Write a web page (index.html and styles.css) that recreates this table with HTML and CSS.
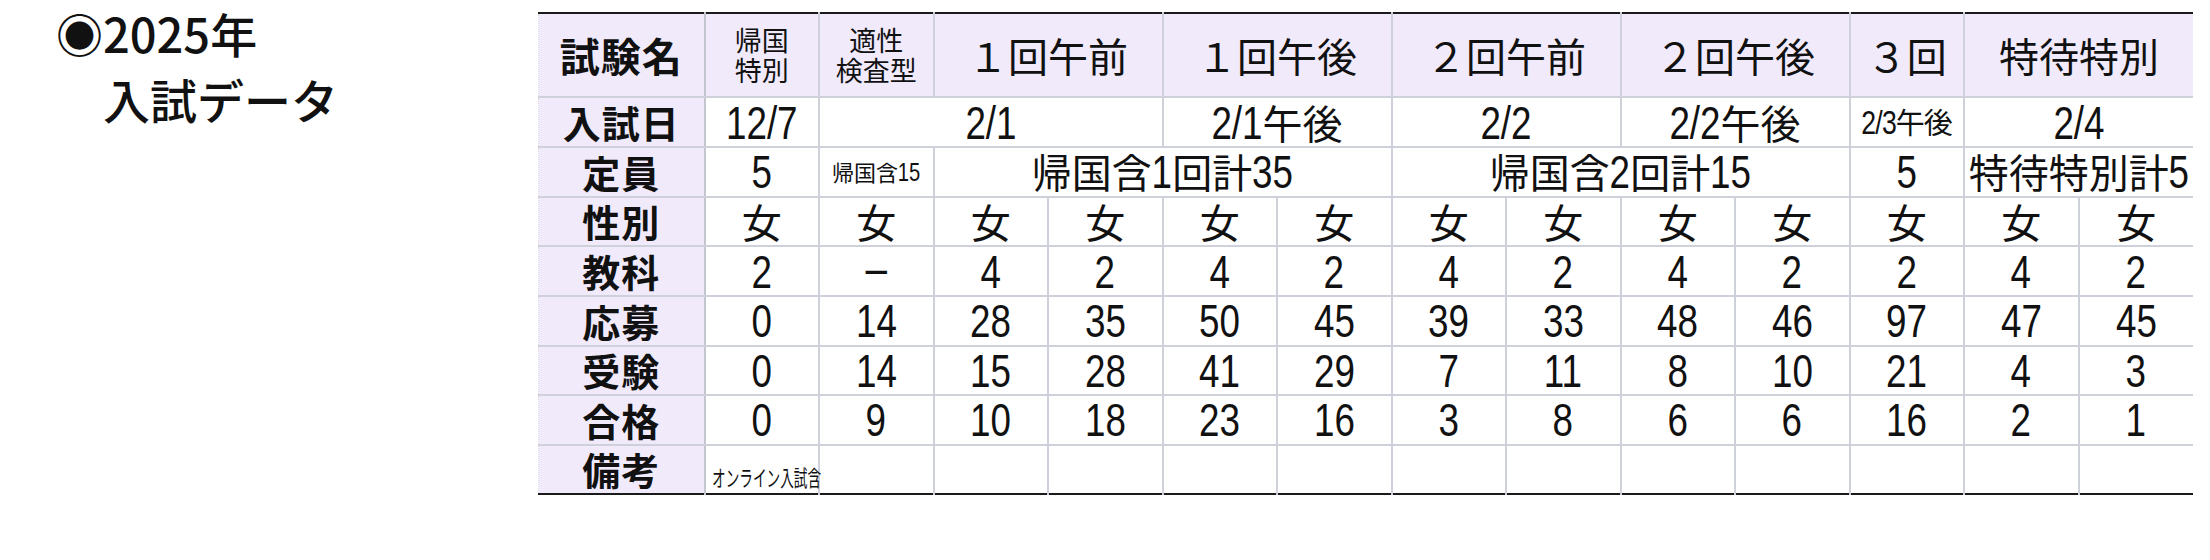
FILE: index.html
```html
<!DOCTYPE html>
<html lang="ja">
<head>
<meta charset="utf-8">
<title>2025年 入試データ</title>
<link rel="stylesheet" href="styles.css">
</head>
<body>
<div class="page">
  <div class="title">◉2025年<br>　入試データ</div>
  <table class="exam">
    <colgroup>
      <col class="c-label">
      <col class="c-data"><col class="c-data"><col class="c-data"><col class="c-data"><col class="c-data">
      <col class="c-data"><col class="c-data"><col class="c-data"><col class="c-data"><col class="c-data">
      <col class="c-data"><col class="c-data"><col class="c-data">
    </colgroup>
    <tr class="head">
      <th class="label">試験名</th>
      <th class="small2">帰国<br>特別</th>
      <th class="small2">適性<br>検査型</th>
      <th colspan="2">１回午前</th>
      <th colspan="2">１回午後</th>
      <th colspan="2">２回午前</th>
      <th colspan="2">２回午後</th>
      <th>３回</th>
      <th colspan="2">特待特別</th>
    </tr>
    <tr>
      <th class="label">入試日</th>
      <td><span class="n n4">12/7</span></td>
      <td colspan="3"><span class="n n3">2/1</span></td>
      <td colspan="2"><span class="n n3">2/1</span>午後</td>
      <td colspan="2"><span class="n n3">2/2</span></td>
      <td colspan="2"><span class="n n3">2/2</span>午後</td>
      <td class="tight"><span class="n n3">2/3</span>午後</td>
      <td colspan="2"><span class="n n3">2/4</span></td>
    </tr>
    <tr>
      <th class="label">定員</th>
      <td><span class="n n1">5</span></td>
      <td class="mini">帰国含<span class="n n2">15</span></td>
      <td colspan="4">帰国含<span class="n n1">1</span>回計<span class="n n2">35</span></td>
      <td colspan="4">帰国含<span class="n n1">2</span>回計<span class="n n2">15</span></td>
      <td><span class="n n1">5</span></td>
      <td colspan="2">特待特別計<span class="n n1">5</span></td>
    </tr>
    <tr>
      <th class="label">性別</th>
      <td>女</td><td>女</td><td>女</td><td>女</td><td>女</td><td>女</td><td>女</td>
      <td>女</td><td>女</td><td>女</td><td>女</td><td>女</td><td>女</td>
    </tr>
    <tr>
      <th class="label">教科</th>
      <td><span class="n n1">2</span></td><td><span class="dash">−</span></td>
      <td><span class="n n1">4</span></td><td><span class="n n1">2</span></td>
      <td><span class="n n1">4</span></td><td><span class="n n1">2</span></td>
      <td><span class="n n1">4</span></td><td><span class="n n1">2</span></td>
      <td><span class="n n1">4</span></td><td><span class="n n1">2</span></td>
      <td><span class="n n1">2</span></td><td><span class="n n1">4</span></td>
      <td><span class="n n1">2</span></td>
    </tr>
    <tr>
      <th class="label">応募</th>
      <td><span class="n n1">0</span></td><td><span class="n n2">14</span></td>
      <td><span class="n n2">28</span></td><td><span class="n n2">35</span></td>
      <td><span class="n n2">50</span></td><td><span class="n n2">45</span></td>
      <td><span class="n n2">39</span></td><td><span class="n n2">33</span></td>
      <td><span class="n n2">48</span></td><td><span class="n n2">46</span></td>
      <td><span class="n n2">97</span></td><td><span class="n n2">47</span></td>
      <td><span class="n n2">45</span></td>
    </tr>
    <tr>
      <th class="label">受験</th>
      <td><span class="n n1">0</span></td><td><span class="n n2">14</span></td>
      <td><span class="n n2">15</span></td><td><span class="n n2">28</span></td>
      <td><span class="n n2">41</span></td><td><span class="n n2">29</span></td>
      <td><span class="n n1">7</span></td><td><span class="n n2">11</span></td>
      <td><span class="n n1">8</span></td><td><span class="n n2">10</span></td>
      <td><span class="n n2">21</span></td><td><span class="n n1">4</span></td>
      <td><span class="n n1">3</span></td>
    </tr>
    <tr>
      <th class="label">合格</th>
      <td><span class="n n1">0</span></td><td><span class="n n1">9</span></td>
      <td><span class="n n2">10</span></td><td><span class="n n2">18</span></td>
      <td><span class="n n2">23</span></td><td><span class="n n2">16</span></td>
      <td><span class="n n1">3</span></td><td><span class="n n1">8</span></td>
      <td><span class="n n1">6</span></td><td><span class="n n1">6</span></td>
      <td><span class="n n2">16</span></td><td><span class="n n1">2</span></td>
      <td><span class="n n1">1</span></td>
    </tr>
    <tr class="last">
      <th class="label">備考</th>
      <td class="note"><span class="note-text">オンライン入試含</span></td>
      <td></td><td></td><td></td><td></td><td></td><td></td>
      <td></td><td></td><td></td><td></td><td></td><td></td>
    </tr>
  </table>
</div>
</body>
</html>
```

FILE: styles.css
```css
html, body {
  margin: 0;
  padding: 0;
  background: #ffffff;
}

body {
  font-family: "Noto Sans CJK JP", "Noto Sans", sans-serif;
  color: #111111;
}

.page {
  display: flex;
  align-items: flex-start;
}

.title {
  box-sizing: border-box;
  width: 538px;
  flex: none;
  padding-left: 56px;
  margin-top: 0;
  font-size: 47px;
  line-height: 66px;
  font-weight: 500;
}

.exam {
  flex: none;
  margin-top: 12px;
  width: 1655px;
  table-layout: fixed;
  border-collapse: collapse;
  border-top: 2px solid #1a1a1a;
  border-bottom: 2px solid #1a1a1a;
}

.c-label { width: 166px; }
.c-data { width: 114.5px; }

.exam th,
.exam td {
  border: 2px solid #cfd1da;
  padding: 0;
  text-align: center;
  vertical-align: middle;
  white-space: nowrap;
}

.exam tr:first-child th,
.exam tr:first-child td { border-top: none; }
.exam tr.last th,
.exam tr.last td { border-bottom: none; }
.exam tr > :last-child { border-right: none; }

.exam td {
  font-size: 40px;
  line-height: 46px;
  height: 47.5px;
  font-weight: 400;
}

.exam tr.head th {
  height: 82px;
  background: #f0eafb;
  font-size: 40px;
  line-height: 46px;
  font-weight: 400;
}

.exam th.label {
  background: #f0eafb;
  font-size: 38px;
  font-weight: 700;
  line-height: 46px;
  border-left: 1px dotted #d8d8e0;
  border-right: 2px solid #c4c6cf;
  letter-spacing: 1px;
}

.exam tr.head th.label {
  font-size: 40px;
  font-weight: 700;
}

.exam tr.head th.small2 {
  font-size: 27px;
  line-height: 30px;
}

/* condensed tall digits */
.n {
  display: inline-block;
  font-family: "Liberation Sans", Arial, sans-serif;
  font-size: 1.15em;
  transform: scaleX(0.8);
  transform-origin: center center;
}
.n1 { margin: 0 -0.056em; }
.n2 { margin: 0 -0.111em; }
.n3 { margin: 0 -0.139em; }
.n4 { margin: 0 -0.195em; }

.dash {
  font-family: "Liberation Sans", Arial, sans-serif;
  font-size: 1.1em;
}

.exam td.tight {
  font-size: 29px;
  letter-spacing: -1px;
}

.exam td.mini {
  font-size: 22px;
}

.exam td.note {
  text-align: left;
  padding-left: 6px;
}

.note-text {
  display: inline-block;
  font-size: 22px;
  line-height: 26px;
  transform: scaleX(0.62);
  transform-origin: left center;
}
```
